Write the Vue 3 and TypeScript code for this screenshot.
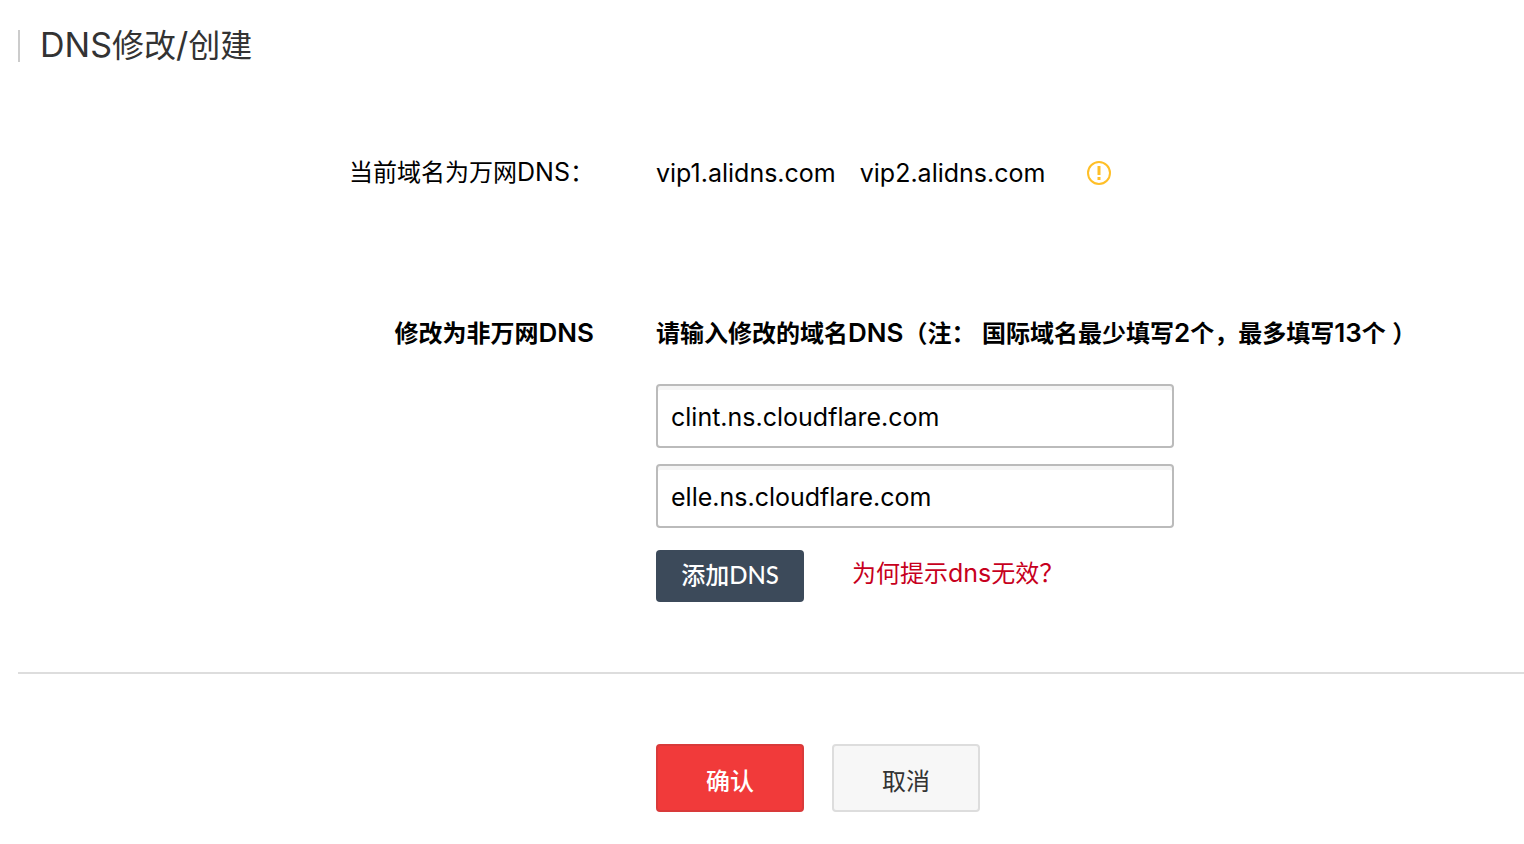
<script setup lang="ts">
import { ref } from 'vue'

const currentServers: string[] = ['vip1.alidns.com', 'vip2.alidns.com']
const servers = ref<string[]>(['clint.ns.cloudflare.com', 'elle.ns.cloudflare.com'])
const maxServers = 13

function addServer(): void {
  if (servers.value.length < maxServers) servers.value.push('')
}
</script>

<template>
  <main class="page">
    <h1 class="title"><span class="latin-title">DNS</span>修改<span class="latin-title">/</span>创建</h1>

    <form class="form" @submit.prevent>
      <div class="row current">
        <span class="label">当前域名为万网<span class="latin">DNS</span>：</span>
        <div class="servers">
          <span v-for="name in currentServers" :key="name" class="latin">{{ name }}</span>
          <svg class="warn" viewBox="0 0 24 24" aria-hidden="true">
            <circle cx="12" cy="12" r="11" fill="none" stroke="#ffbf27" stroke-width="2" />
            <path d="M12 5v9M12 16v3" fill="none" stroke="#ffbf27" stroke-width="3" />
          </svg>
        </div>
      </div>

      <div class="row change">
        <strong class="label">修改为非万网<span class="latin-bold">DNS</span></strong>
        <div class="fields">
          <strong id="dns-hint" class="hint">请输入修改的域名<span class="latin-bold">DNS</span>（注：<span class="latin-bold">&nbsp;</span>国际域名最少填写<span class="latin-bold">2</span>个，最多填写<span class="latin-bold">13</span>个<span class="latin-bold">&nbsp;</span>）</strong>
          <input
            v-for="(_, i) in servers"
            :key="i"
            v-model="servers[i]"
            class="field"
            type="text"
            aria-labelledby="dns-hint"
            spellcheck="false"
          />
          <div class="extra">
            <button class="add" type="button" @click="addServer">添加DNS</button>
            <a class="help" href="#help">为何提示<span class="latin">dns</span>无效<span class="latin">？</span></a>
          </div>
        </div>
      </div>

      <div class="row actions">
        <button class="action confirm" type="submit">确认</button>
        <button class="action cancel" type="button">取消</button>
      </div>
    </form>
  </main>
</template>

<style>
body {
  margin: 0;
  background: #fff;
}
</style>

<style scoped>
.page {
  padding: 30px 0 32px 18px;
  font: 24px/32px Inter, "Noto Sans CJK SC", sans-serif;
  color: #000;
}

.title {
  margin: 0;
  padding-left: 20px;
  border-left: 2px solid #ccc;
  font-size: 32px;
  line-height: 32px;
  font-weight: 400;
  color: #333;
}

.latin-title {
  font-size: 34px;
  line-height: 1px;
}

.latin {
  font-size: 25px;
}

.latin-bold {
  font-size: 26px;
  font-weight: 600;
}

.row {
  display: grid;
  grid-template-columns: 576px 1fr;
  column-gap: 62px;
}

.label {
  text-align: right;
}

.label .latin,
.help .latin,
.latin-bold {
  line-height: 1px;
}

.current {
  margin-top: 95px;
}

.servers {
  display: flex;
  align-items: center;
  gap: 24px;
}

.warn {
  width: 24px;
  height: 24px;
  margin-left: 18px;
  overflow: visible;
}

.change {
  margin-top: 129px;
  padding-bottom: 70px;
  border-bottom: 2px solid #ddd;
}

.fields {
  display: flex;
  flex-direction: column;
  align-items: flex-start;
}

.hint {
  margin-bottom: 34px;
}

.field {
  box-sizing: border-box;
  width: 100%;
  max-width: 518px;
  height: 64px;
  padding: 2px 13px 0;
  border: 2px solid #bbb;
  border-radius: 4px;
  background: #fff;
  box-shadow: inset 0 4px #f5f5f5;
  font: inherit;
  font-size: 25px;
  color: #000;
  outline: none;
}

.field + .field {
  margin-top: 16px;
}

.extra {
  display: flex;
  gap: 48px;
  margin-top: 22px;
}

.add {
  width: 148px;
  height: 52px;
  padding: 0 0 2px;
  border: 0;
  border-radius: 4px;
  background: #3c4a5a;
  color: #fff;
  font: 500 24px/32px Lato, "Noto Sans CJK SC", sans-serif;
}

.help {
  margin-top: 8px;
  color: #c7001d;
  text-decoration: none;
}

.actions {
  grid-template-columns: 148px 148px;
  column-gap: 28px;
  margin-top: 70px;
  padding-left: 638px;
}

.action {
  height: 68px;
  padding: 4px 0 0;
  border: 2px solid #d93a3a;
  border-radius: 4px;
  background: #f13a3a;
  color: #fff;
  font: 500 24px/32px "Noto Sans CJK SC", sans-serif;
}

.cancel {
  border-color: #ddd;
  background: #f7f7f7;
  color: #333;
  font-weight: 400;
}
</style>
